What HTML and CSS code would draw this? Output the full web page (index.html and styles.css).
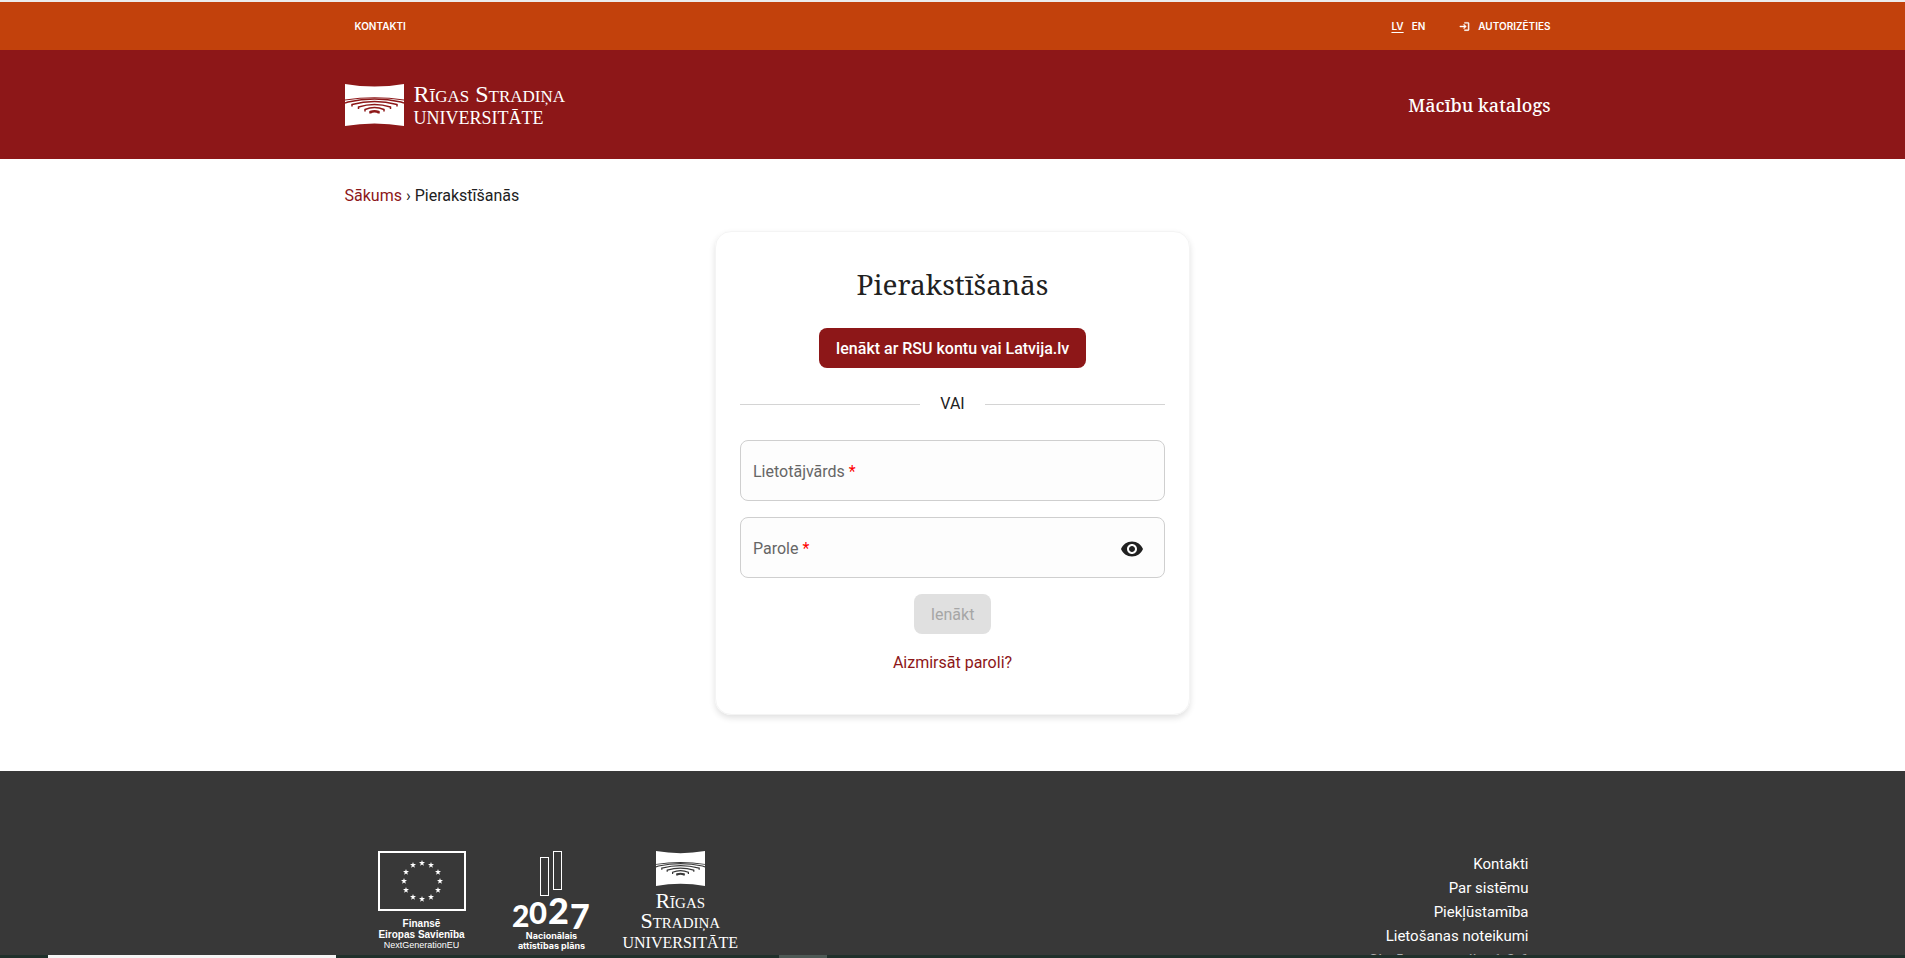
FILE: index.html
```html
<!DOCTYPE html>
<html lang="lv">
<head>
<meta charset="utf-8">
<title>Pierakstīšanās</title>
<link rel="stylesheet" href="styles.css">
</head>
<body>
<svg class="defs" aria-hidden="true">
  <symbol id="emblem" viewBox="0 0 59 42">
    <path fill="currentColor" d="M0 0Q29.500 5 59 0V15.500Q29.500 11 0 15.500Z"/>
    <path fill="currentColor" d="M0 16.500Q29.500 12 59 16.500V42Q29.500 37 0 42Z"/>
    <g fill="none" stroke="var(--cut)" stroke-width="1.500">
      <path d="M0 19L3 18Q29.500 12 56 18L59 19"/>
      <path d="M7 22.500V20.500Q29.500 14.500 52 20.500V22.500"/>
      <path d="M13.500 25V23Q29.500 18 45.500 23V25"/>
      <path d="M20 27.500V25.500Q29.500 21.500 39 25.500V27.500"/>
      <path d="M25.500 29.500V28Q29.500 26.500 33.500 28V29.500" stroke-width="2.500"/>
    </g>
  </symbol>
  <symbol id="star" viewBox="0 0 10 10"><path fill="#fff" d="M5 0l1.200 3.500H10L7 5.800 8.100 9.500 5 7.300 1.900 9.500 3 5.800 0 3.500h3.800z"/></symbol>
</svg>

<div class="topbar">
  <div class="container topbar-row">
    <a class="top-link contact" href="#">KONTAKTI</a>
    <nav class="top-nav">
      <a class="top-link current" href="#">LV</a>
      <a class="top-link" href="#">EN</a>
      <a class="top-link login" href="#">
        <svg viewBox="0 0 24 24" width="11" height="11"><path fill="currentColor" d="M11 7l-1.400 1.400 2.600 2.600H2v2h10.200l-2.600 2.600L11 17l5-5zM20 19h-8v2h8c1.100 0 2-.9 2-2V5c0-1.100-.9-2-2-2h-8v2h8z" stroke="currentColor"/></svg>
        <span>AUTORIZĒTIES</span>
      </a>
    </nav>
  </div>
</div>

<header class="header">
  <div class="container header-row">
    <a class="brand" href="#">
      <svg class="brand-mark"><use href="#emblem"/></svg>
      <span class="brand-name"><span class="caps">Rīgas Stradiņa</span><span class="caps low">universitāte</span></span>
    </a>
    <a class="catalog" href="#">Mācību katalogs</a>
  </div>
</header>

<main class="main">
  <nav class="container crumbs"><a href="#">Sākums</a> <span>›</span> <span>Pierakstīšanās</span></nav>
  <form class="card">
    <h1>Pierakstīšanās</h1>
    <button class="btn" type="button">Ienākt ar RSU kontu vai Latvija.lv</button>
    <div class="divider">VAI</div>
    <div class="field">
      <label for="user">Lietotājvārds <span>*</span></label>
      <input id="user" type="text">
    </div>
    <div class="field">
      <label for="pass">Parole <span>*</span></label>
      <input id="pass" type="password">
      <button class="eye" type="button" aria-label="Rādīt paroli"><svg viewBox="0 0 24 24" width="24" height="24"><path fill="currentColor" d="M12 4.500C7 4.500 2.730 7.610 1 12c1.730 4.390 6 7.500 11 7.500s9.270-3.110 11-7.500c-1.730-4.390-6-7.500-11-7.500zM12 17c-2.760 0-5-2.240-5-5s2.240-5 5-5 5 2.240 5 5-2.240 5-5 5zm0-8c-1.660 0-3 1.340-3 3s1.340 3 3 3 3-1.340 3-3-1.340-3-3-3z"/></svg></button>
    </div>
    <button class="btn" type="submit" disabled>Ienākt</button>
    <a class="forgot" href="#">Aizmirsāt paroli?</a>
  </form>
</main>

<footer class="footer">
  <div class="container footer-row">
    <div class="partners">
      <div class="partner eu">
        <svg width="88" height="60" viewBox="0 0 88 60">
          <rect x="1" y="1" width="86" height="58" fill="none" stroke="#fff" stroke-width="2"/>
          <use href="#star" x="41" y="9" width="6" height="6"/><use href="#star" x="50" y="11" width="6" height="6"/><use href="#star" x="57" y="18" width="6" height="6"/><use href="#star" x="59" y="27" width="6" height="6"/><use href="#star" x="57" y="36" width="6" height="6"/><use href="#star" x="50" y="43" width="6" height="6"/><use href="#star" x="41" y="45" width="6" height="6"/><use href="#star" x="32" y="43" width="6" height="6"/><use href="#star" x="25" y="36" width="6" height="6"/><use href="#star" x="23" y="27" width="6" height="6"/><use href="#star" x="25" y="18" width="6" height="6"/><use href="#star" x="32" y="11" width="6" height="6"/>
        </svg>
        <b>Finansē</b>
        <b>Eiropas Savienība</b>
        <span>NextGenerationEU</span>
      </div>
      <div class="partner nap">
        <svg width="80" height="80" viewBox="0 0 80 80">
          <g fill="none" stroke="#fff"><rect x="28.500" y="6.500" width="8" height="38"/><rect x="41.500" y=".5" width="8" height="38"/></g>
          <g class="year"><text x="0" y="76" font-size="30">2</text><text x="17" y="73" font-size="31">0</text><text x="36" y="73" font-size="36">2</text><text x="58" y="78" font-size="34">7</text></g>
        </svg>
        <b>Nacionālais</b>
        <b>attīstības plāns</b>
      </div>
      <div class="partner rsu">
        <svg><use href="#emblem"/></svg>
        <span class="caps">Rīgas</span>
        <span class="caps">Stradiņa</span>
        <span class="caps low">universitāte</span>
      </div>
    </div>
    <nav class="footer-links">
      <a href="#">Kontakti</a>
      <a href="#">Par sistēmu</a>
      <a href="#">Piekļūstamība</a>
      <a href="#">Lietošanas noteikumi</a>
      <span>Sistēmas versija: 1.3.6</span>
    </nav>
  </div>
</footer>
<div class="taskbar"><i class="white"></i><i class="grey"></i></div>
</body>
</html>
```

FILE: styles.css
```css
* { box-sizing: border-box; }
html, body { height: 100%; }
body { margin: 0; overflow: hidden; background: #fff; color: #212121; font: 16px/24px Roboto, "Noto Sans", sans-serif; }
a { color: #8d1718; text-decoration: none; }
.defs { display: none; }
.container { width: 100%; max-width: 1216px; margin: 0 auto; padding-right: 10px; }
.topbar { background: #c2410c; border-top: 2px solid #ececec; }
.topbar-row { display: flex; justify-content: space-between; align-items: center; height: 48px; padding-left: 10px; }
.top-link { color: #fff; font: 600 10px/16px Inter, "Noto Sans", sans-serif; }
.top-nav { display: flex; align-items: center; gap: 8px; }
.current { text-decoration: underline; text-underline-offset: 2px; }
.login { display: flex; align-items: center; gap: 8px; margin-left: 26px; }
.header { background: #8d1718; }
.header-row { display: flex; justify-content: space-between; align-items: center; height: 109px; }
.brand { display: flex; align-items: center; gap: 10px; color: #fff; --cut: #8d1718; }
.brand-mark { width: 59px; height: 42px; }
.brand-name { display: flex; flex-direction: column; font: 24px/22px "Liberation Serif", serif; }
.brand-name .low { font-size: 26px; }
.caps { font-variant-caps: small-caps; white-space: nowrap; }
.catalog { color: #fff; font: 500 18px/28px "Noto Serif", "Liberation Serif", serif; }
.main { padding: 24px 0 56px; }
.crumbs { padding-top: 1px; }
.crumbs a { color: #8d1718; }
.card { display: flex; flex-direction: column; align-items: center; width: 475px; max-width: 100%; margin: 23px auto 0; padding: 32px 24px 40px; border: 1px solid #f4f4f4; border-radius: 16px; box-shadow: 0 3px 6px rgba(0,0,0,.12); }
h1 { margin: 0 0 24px; font: 28px/40px "Noto Serif", "Liberation Serif", serif; }
.btn { height: 40px; padding: 1px 17px 0; border: 0; border-radius: 8px; background: #8d1718; color: #fff; font: 500 16px/24px Roboto, "Noto Sans", sans-serif; }
.btn:disabled { background: #e0e0e0; color: #a6a6a6; font-weight: 400; }
.divider { display: flex; align-items: center; gap: 20px; width: 100%; margin: 24px 0; }
.divider::before, .divider::after { content: ""; flex: 1; border-top: 1px solid #d4d4d4; }
.field { display: flex; align-items: center; width: 100%; height: 61px; margin-bottom: 16px; padding: 2px 20px 0 12px; border: 1px solid #cfcfcf; border-radius: 8px; background: #fdfdfd; color: #666; }
.field label span { color: #f00; }
.field input { flex: 1; min-width: 0; height: 40px; border: 0; outline: 0; background: transparent; font: inherit; }
.eye { display: flex; padding: 0; border: 0; background: none; color: #212121; }
.forgot { margin-top: 17px; margin-bottom: -1px; }
.footer { background: #383838; }
.footer-row { display: flex; justify-content: space-between; align-items: flex-start; height: 187px; padding: 80px 32px 0 33px; }
.partners { display: flex; align-items: flex-start; gap: 31px; color: #fff; }
.partner { display: flex; flex-direction: column; align-items: center; text-align: center; white-space: nowrap; }
.eu { margin-right: 15px; font: 10px/11px "Liberation Sans", sans-serif; }
.eu svg { margin-bottom: 7px; }
.eu span { font-size: 9px; }
.footer-links { display: flex; flex-direction: column; align-items: flex-end; padding-top: 1px; color: #aaa; font-size: 15px; }
.footer-links a { color: #fff; }
.footer-links span { padding-top: 1px; font-size: 16px; }
.nap { font: 9px/10px Inter, sans-serif; }
.year { fill: #fff; font-family: Lato, sans-serif; font-weight: 900; }
.rsu { --cut: #383838; font: 22px/20px "Liberation Serif", serif; }
.rsu .low { font-size: 23px; }
.rsu svg { width: 49px; height: 35px; margin-bottom: 5px; }
.taskbar { position: absolute; left: 0; right: 0; bottom: 0; display: flex; height: 3px; background: #20302b; }
.white { width: 288px; margin-left: 48px; background: #f4f4f4; }
.grey { width: 48px; margin-left: 443px; background: #4d5955; }
```
